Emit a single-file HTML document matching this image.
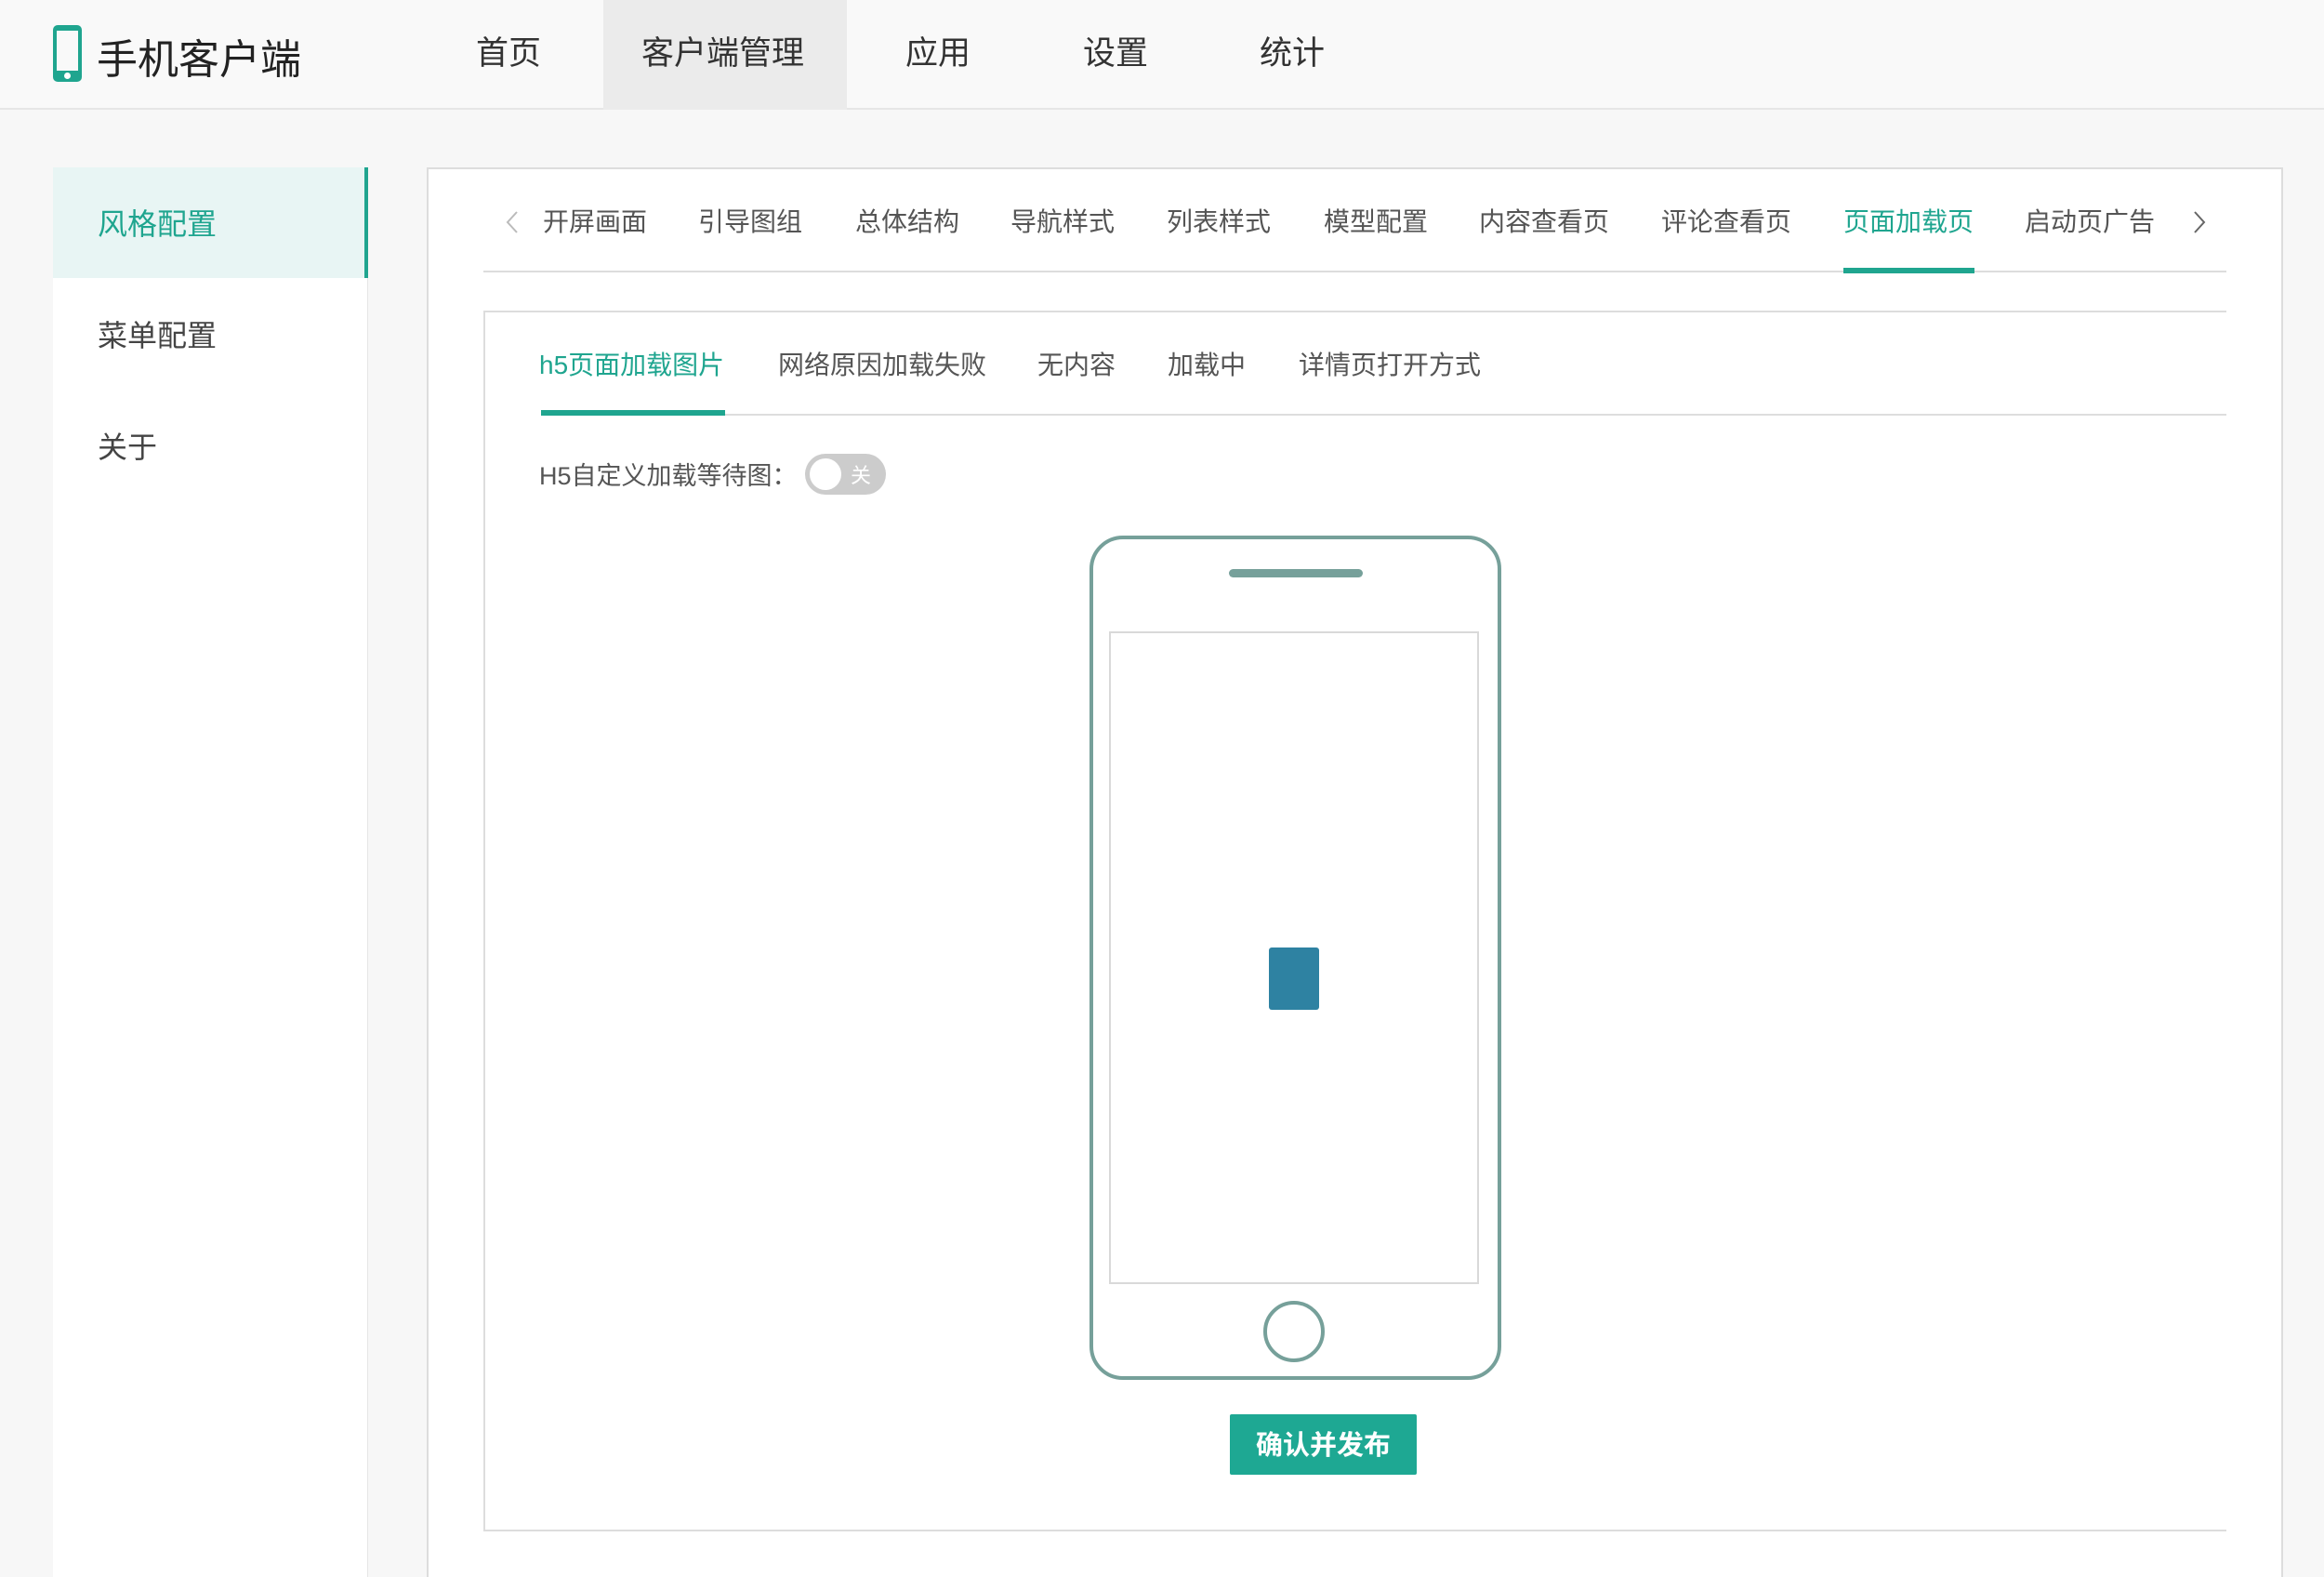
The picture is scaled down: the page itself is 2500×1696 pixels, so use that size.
<!DOCTYPE html>
<html style="height:1696px;overflow:hidden"><head><meta charset="utf-8"><style>
*{margin:0;padding:0;box-sizing:border-box}
body{width:2500px;height:1696px;background:#f7f7f7;font-family:"Liberation Sans","Noto Sans CJK SC",sans-serif;position:relative;overflow:hidden;color:#555}
.a{position:absolute;white-space:nowrap}
.hdr{left:0;top:0;width:2500px;height:118px;background:#f9f9f9;border-bottom:2px solid #e6e6e6}
.nav{font-size:35px;color:#333;top:29px}
.tab{font-size:28px;color:#555;top:217px}
.itab{font-size:28px;color:#555;top:371px}
</style></head><body>
<div class="a hdr"></div>
<div class="a" style="left:649px;top:0;width:262px;height:118px;background:#ebebeb"></div>
<div class="a" style="left:57px;top:27px;width:31px;height:61px;border:4px solid #1fa58f;border-radius:5px;border-top-width:6px;border-bottom-width:12px"></div>
<div class="a" style="left:69px;top:78px;width:7px;height:7px;border-radius:50%;background:#fff"></div>
<div class="a" style="left:104px;top:28px;font-size:44px;color:#222">手机客户端</div>
<div class="a nav" style="left:512px">首页</div>
<div class="a nav" style="left:690px">客户端管理</div>
<div class="a nav" style="left:974px">应用</div>
<div class="a nav" style="left:1165px">设置</div>
<div class="a nav" style="left:1355px">统计</div>

<div class="a" style="left:57px;top:180px;width:339px;height:1516px;background:#fff;border-right:1px solid #e6e6e6"></div>
<div class="a" style="left:57px;top:180px;width:339px;height:119px;background:#e8f5f4;border-right:4px solid #1fa58f"></div>
<div class="a" style="left:105px;top:216px;font-size:32px;color:#1fa58f">风格配置</div>
<div class="a" style="left:105px;top:336px;font-size:32px;color:#444">菜单配置</div>
<div class="a" style="left:105px;top:456px;font-size:32px;color:#444">关于</div>

<div class="a" style="left:459px;top:180px;width:1997px;height:1516px;background:#fff;border:2px solid #ddd;border-bottom:none"></div>
<div class="a" style="left:520px;top:291px;width:1875px;height:2px;background:#ddd"></div>
<svg class="a" style="left:543px;top:226px" width="16" height="26"><path d="M13 2 L3 13 L13 24" fill="none" stroke="#bbb" stroke-width="2"/></svg>
<svg class="a" style="left:2358px;top:226px" width="16" height="26"><path d="M3 2 L13 13 L3 24" fill="none" stroke="#666" stroke-width="2"/></svg>
<div class="a tab" style="left:584px">开屏画面</div>
<div class="a tab" style="left:751px">引导图组</div>
<div class="a tab" style="left:920px">总体结构</div>
<div class="a tab" style="left:1087px">导航样式</div>
<div class="a tab" style="left:1255px">列表样式</div>
<div class="a tab" style="left:1424px">模型配置</div>
<div class="a tab" style="left:1591px">内容查看页</div>
<div class="a tab" style="left:1787px">评论查看页</div>
<div class="a tab" style="left:1983px;color:#1fa58f">页面加载页</div>
<div class="a tab" style="left:2178px">启动页广告</div>
<div class="a" style="left:1983px;top:288px;width:141px;height:6px;background:#1fa58f"></div>

<div class="a" style="left:520px;top:334px;width:1875px;height:1313px;border:2px solid #ddd;border-right:none"></div>
<div class="a" style="left:582px;top:445px;width:1813px;height:2px;background:#ddd"></div>
<div class="a" style="left:582px;top:441px;width:198px;height:6px;background:#1fa58f"></div>
<div class="a itab" style="left:580px;color:#1fa58f">h5页面加载图片</div>
<div class="a itab" style="left:837px">网络原因加载失败</div>
<div class="a itab" style="left:1116px">无内容</div>
<div class="a itab" style="left:1256px">加载中</div>
<div class="a itab" style="left:1397px">详情页打开方式</div>

<div class="a" style="left:580px;top:490px;font-size:27px;color:#555">H5自定义加载等待图：</div>
<div class="a" style="left:866px;top:488px;width:87px;height:44px;border-radius:22px;background:#ccc"></div>
<div class="a" style="left:871px;top:493px;width:34px;height:34px;border-radius:50%;background:#fff"></div>
<div class="a" style="left:915px;top:494px;font-size:22px;color:#fff">关</div>

<div class="a" style="left:1172px;top:576px;width:443px;height:908px;border:4px solid #76a09a;border-radius:36px"></div>
<div class="a" style="left:1322px;top:612px;width:144px;height:9px;border-radius:5px;background:#76a09a"></div>
<div class="a" style="left:1193px;top:679px;width:398px;height:702px;border:2px solid #d9d9d9"></div>
<div class="a" style="left:1365px;top:1019px;width:54px;height:67px;background:#2e82a2;border-radius:3px"></div>
<div class="a" style="left:1359px;top:1399px;width:66px;height:66px;border:4px solid #76a09a;border-radius:50%"></div>
<div class="a" style="left:1323px;top:1521px;width:201px;height:65px;background:#1ea893;border-radius:2px;color:#fff;font-size:29px;font-weight:bold;text-align:center;line-height:68px">确认并发布</div>
</body></html>
